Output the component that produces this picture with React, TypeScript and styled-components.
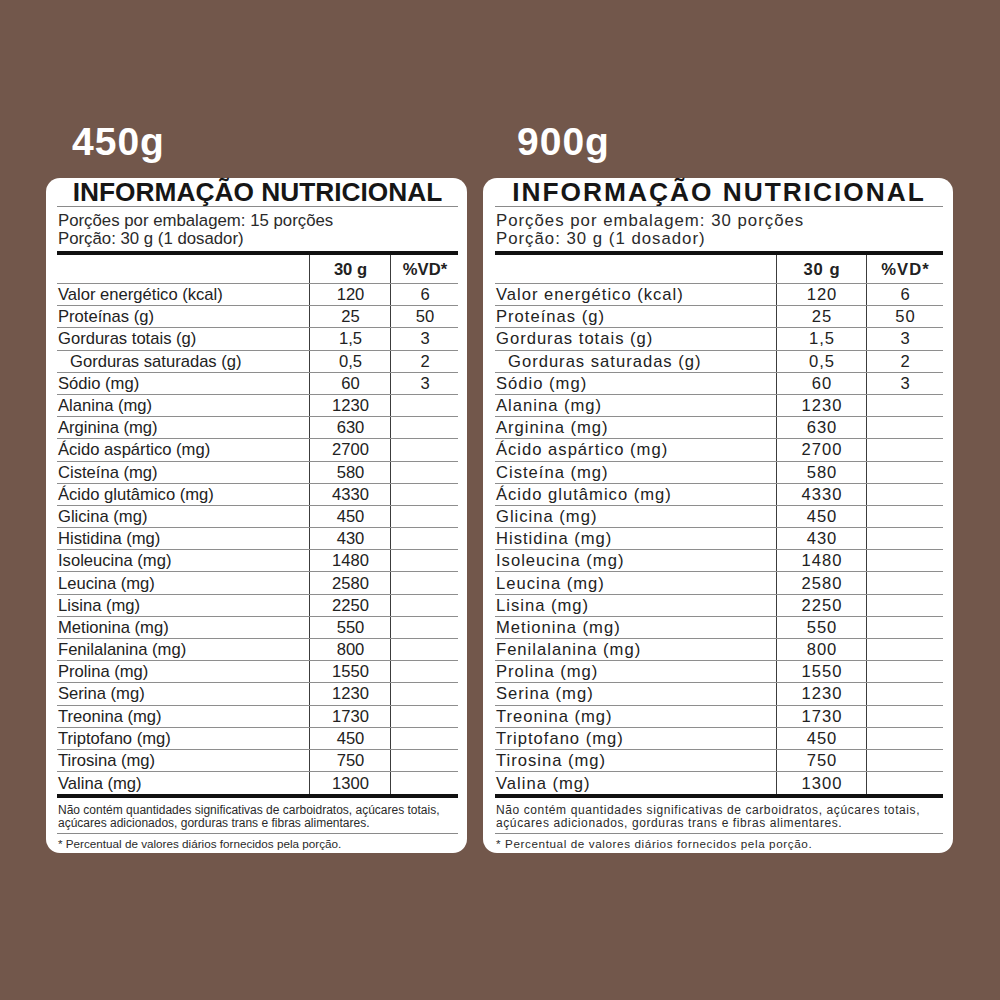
import styled, { createGlobalStyle } from "styled-components";

const GlobalStyle = createGlobalStyle`
  html, body {
    margin: 0;
    padding: 0;
    background: #72574b;
  }
  body {
    font-family: "Liberation Sans", Arial, sans-serif;
  }
`;

type Nutrient = { label: string; value: string; vd?: string; indent?: boolean };

const nutrients: Nutrient[] = [
  { label: "Valor energético (kcal)", value: "120", vd: "6" },
  { label: "Proteínas (g)", value: "25", vd: "50" },
  { label: "Gorduras totais (g)", value: "1,5", vd: "3" },
  { label: "Gorduras saturadas (g)", value: "0,5", vd: "2", indent: true },
  { label: "Sódio (mg)", value: "60", vd: "3" },
  { label: "Alanina (mg)", value: "1230" },
  { label: "Arginina (mg)", value: "630" },
  { label: "Ácido aspártico (mg)", value: "2700" },
  { label: "Cisteína (mg)", value: "580" },
  { label: "Ácido glutâmico (mg)", value: "4330" },
  { label: "Glicina (mg)", value: "450" },
  { label: "Histidina (mg)", value: "430" },
  { label: "Isoleucina (mg)", value: "1480" },
  { label: "Leucina (mg)", value: "2580" },
  { label: "Lisina (mg)", value: "2250" },
  { label: "Metionina (mg)", value: "550" },
  { label: "Fenilalanina (mg)", value: "800" },
  { label: "Prolina (mg)", value: "1550" },
  { label: "Serina (mg)", value: "1230" },
  { label: "Treonina (mg)", value: "1730" },
  { label: "Triptofano (mg)", value: "450" },
  { label: "Tirosina (mg)", value: "750" },
  { label: "Valina (mg)", value: "1300" },
];

const Page = styled.div`
  width: 1000px;
  height: 1000px;
  box-sizing: border-box;
  padding: 120px 0 0 46px;
  display: flex;
  align-items: flex-start;
  gap: 16px;
`;

const Column = styled.section<{ $width: number }>`
  width: ${({ $width }) => $width}px;
  display: flex;
  flex-direction: column;
`;

const Heading = styled.h2<{ $indent: number }>`
  margin: 0 0 14px;
  padding-left: ${({ $indent }) => $indent}px;
  color: #fff;
  font-size: 39px;
  font-weight: 700;
  line-height: 44px;
  letter-spacing: 1px;
`;

const Title = styled.h3`
  margin: 0;
  text-align: center;
  font-size: 26.3px;
  font-weight: 700;
  line-height: 28px;
  color: #161616;
  border-bottom: 1px solid #8a8a8a;
`;

const Serving = styled.div`
  padding: 5px 0 4px 1px;
  font-size: 16.8px;
  line-height: 17.5px;
  color: #2a2a2a;
  border-bottom: 4px solid #111;
`;

const Row = styled.div<{ $cols: string; $header?: boolean; $last?: boolean }>`
  display: grid;
  grid-template-columns: ${({ $cols }) => $cols};
  box-sizing: border-box;
  height: ${({ $header }) => ($header ? "29px" : "22.2px")};
  border-bottom: ${({ $last }) => ($last ? "none" : "1px solid #8e8e8e")};
  font-size: 16.6px;
  font-weight: ${({ $header }) => ($header ? 700 : 400)};
  color: #222;
`;

const Cell = styled.div<{ $align?: "left" | "center"; $indent?: boolean; $divider?: boolean }>`
  display: flex;
  align-items: center;
  justify-content: ${({ $align }) => ($align === "center" ? "center" : "flex-start")};
  padding-left: ${({ $indent }) => ($indent ? "13px" : "1px")};
  padding-top: 1px;
  border-left: ${({ $divider }) => ($divider ? "1px solid #3c3c3c" : "none")};
  white-space: nowrap;
`;

const Note = styled.div`
  padding: 6px 0 3px 1px;
  font-size: 12px;
  line-height: 13px;
  color: #2a2a2a;
  border-top: 4px solid #111;
  border-bottom: 1px solid #8a8a8a;
`;

const Percent = styled.div`
  padding: 3px 0 3px 1px;
  font-size: 11.7px;
  line-height: 13px;
  color: #2a2a2a;
`;

const Card = styled.div<{ $padLeft: number; $padRight: number; $wide?: boolean }>`
  background: #fff;
  border-radius: 14px;
  padding: 0 ${({ $padRight }) => $padRight}px 0 ${({ $padLeft }) => $padLeft}px;

  ${Title} {
    letter-spacing: ${({ $wide }) => ($wide ? "2px" : "0")};
  }
  ${Serving}, ${Row} {
    letter-spacing: ${({ $wide }) => ($wide ? "1px" : "0")};
  }
  ${Note}, ${Percent} {
    letter-spacing: ${({ $wide }) => ($wide ? "0.6px" : "0")};
  }
`;

type LabelProps = {
  size: string;
  portions: number;
  width: number;
  indent: number;
  padLeft: number;
  padRight: number;
  cols: string;
  wide?: boolean;
};

function NutritionLabel({ size, portions, width, indent, padLeft, padRight, cols, wide }: LabelProps) {
  return (
    <Column $width={width}>
      <Heading $indent={indent}>{size}</Heading>
      <Card $padLeft={padLeft} $padRight={padRight} $wide={wide}>
        <Title>INFORMAÇÃO NUTRICIONAL</Title>
        <Serving>
          Porções por embalagem: {portions} porções
          <br />
          Porção: 30 g (1 dosador)
        </Serving>
        <Row $cols={cols} $header>
          <Cell />
          <Cell $align="center" $divider>
            30 g
          </Cell>
          <Cell $align="center" $divider>
            %VD*
          </Cell>
        </Row>
        {nutrients.map((n, i) => (
          <Row key={n.label} $cols={cols} $last={i === nutrients.length - 1}>
            <Cell $indent={n.indent}>{n.label}</Cell>
            <Cell $align="center" $divider>
              {n.value}
            </Cell>
            <Cell $align="center" $divider>
              {n.vd ?? ""}
            </Cell>
          </Row>
        ))}
        <Note>
          Não contém quantidades significativas de carboidratos, açúcares totais,
          <br />
          açúcares adicionados, gorduras trans e fibras alimentares.
        </Note>
        <Percent>* Percentual de valores diários fornecidos pela porção.</Percent>
      </Card>
    </Column>
  );
}

export default function App() {
  return (
    <>
      <GlobalStyle />
      <Page>
        <NutritionLabel
          size="450g"
          portions={15}
          width={421}
          indent={26}
          padLeft={11}
          padRight={9}
          cols="252px 81px 68px"
        />
        <NutritionLabel
          size="900g"
          portions={30}
          width={470}
          indent={34}
          padLeft={12}
          padRight={10}
          cols="281px 90px 77px"
          wide
        />
      </Page>
    </>
  );
}
